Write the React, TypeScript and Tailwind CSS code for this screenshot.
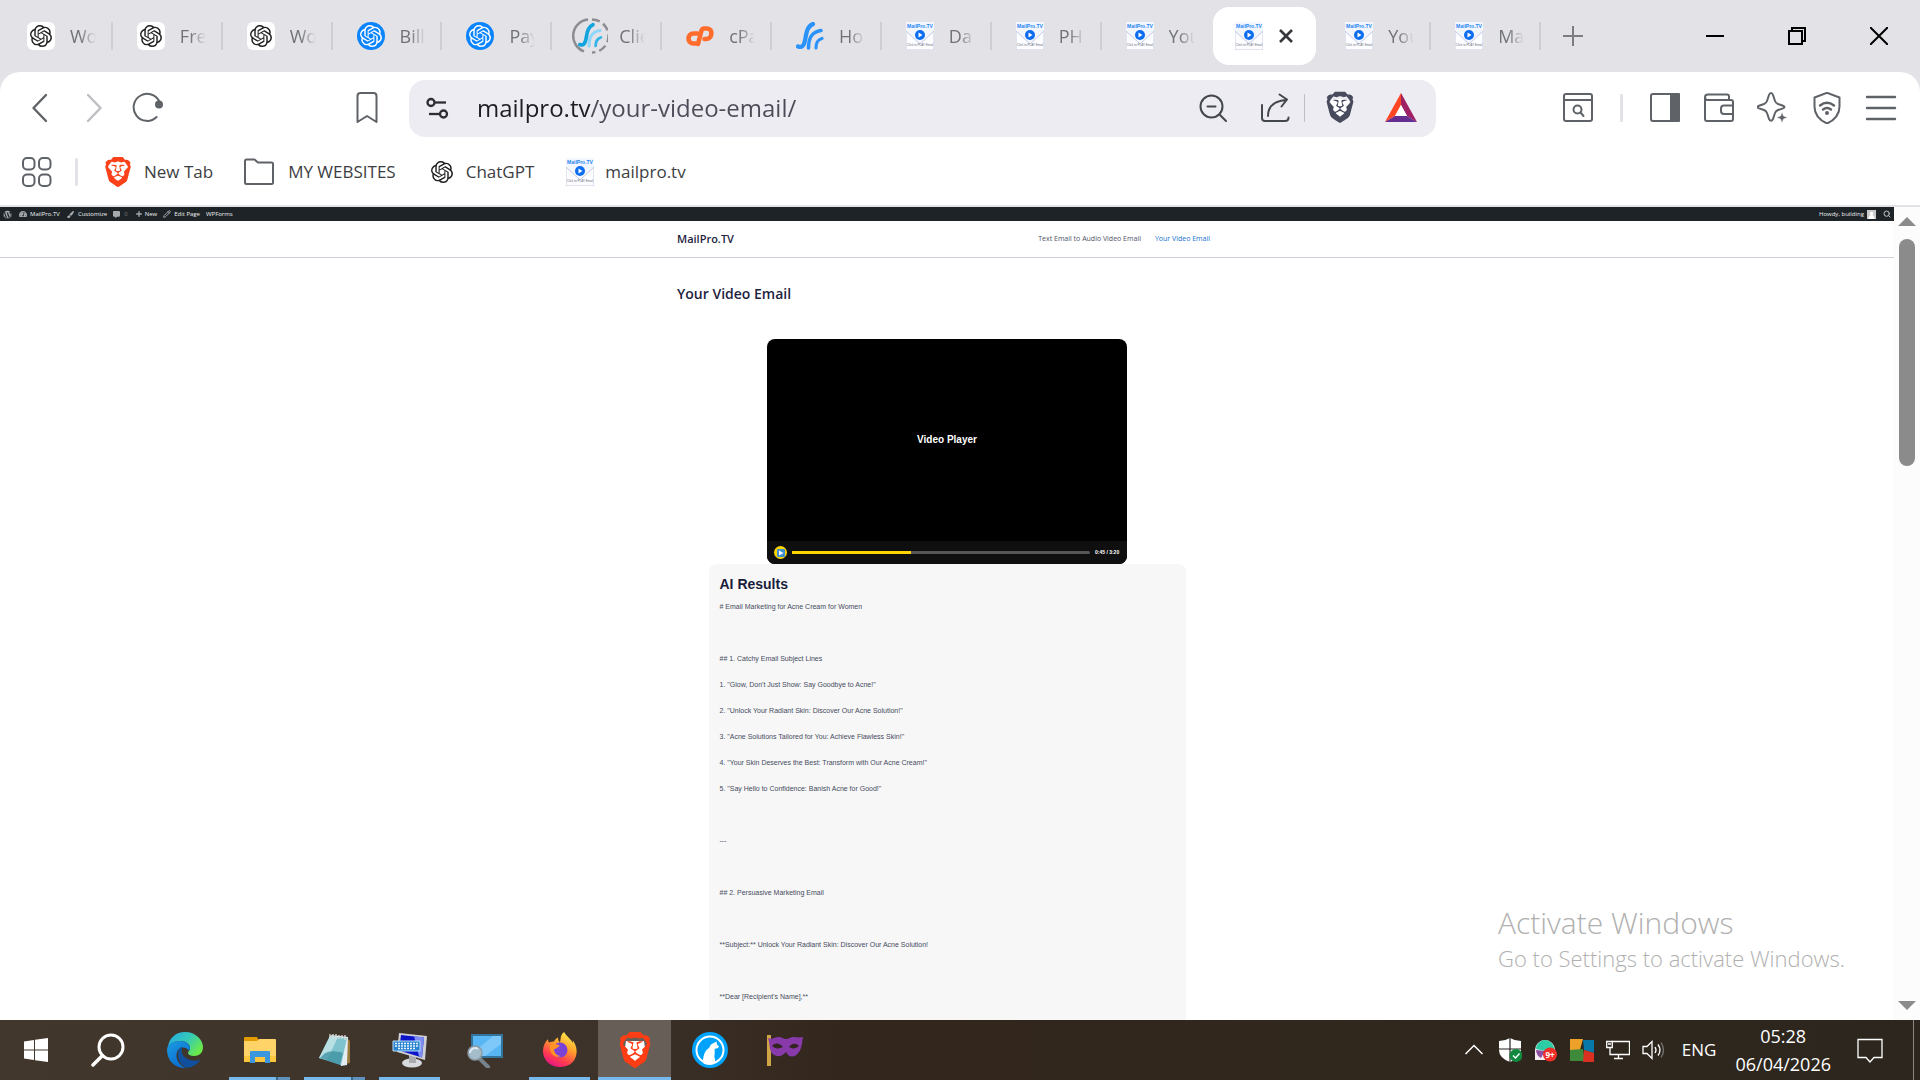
import React from "react";
import { SiOpenai, SiBrave } from "react-icons/si";
import { FaWordpress, FaTachometerAlt, FaPaintBrush, FaCommentAlt } from "react-icons/fa";
import { Plus, Pencil, Search } from "lucide-react";

function ChatTile() {
  return (
    <span className="flex h-7 w-7 shrink-0 items-center justify-center rounded-md bg-white">
      <SiOpenai size={22} color="#202020" />
    </span>
  );
}

function ChatRound() {
  return (
    <span className="flex h-7 w-7 shrink-0 items-center justify-center rounded-full bg-[#0a84ff]">
      <SiOpenai size={22} color="#ffffff" />
    </span>
  );
}

function Swoosh({ a, b, c }: { a: string; b: string; c: string }) {
  return (
    <g fill="none" strokeLinecap="round">
      <path d="M2 24.500c4 1.500 6-1 7-6 1.500-8 2-14 8-16.500" stroke={a} strokeWidth="4.200" />
      <path d="M12.500 26c0-10 3-16 12.500-17.500" stroke={b} strokeWidth="3.600" />
      <path d="M20 26c0-5 1-8 6-9.500" stroke={c} strokeWidth="3.200" />
    </g>
  );
}

function ClientIcon() {
  return (
    <svg viewBox="0 0 36 36" className="-mx-1 h-9 w-9 shrink-0" aria-hidden="true">
      <path d="M16 1.500A16.500 16.500 0 0 0 12 33.400" fill="none" stroke="#8b8d92" strokeWidth="2.500" />
      <path d="M20 1.500A16.500 16.500 0 0 1 20 34.500" fill="none" stroke="#8b8d92" strokeWidth="2.500" strokeDasharray="8 4" />
      <g transform="translate(6 5) scale(0.88)">
        <Swoosh a="#12a5dd" b="#8fd6fb" c="#35b4e8" />
      </g>
    </svg>
  );
}

function HostIcon() {
  return (
    <svg viewBox="0 0 28 28" className="h-7 w-7 shrink-0" aria-hidden="true">
      <Swoosh a="#2a92fb" b="#2a92fb" c="#2a92fb" />
    </svg>
  );
}

function CpIcon() {
  return (
    <svg viewBox="0 0 28 28" className="h-7 w-7 shrink-0" fill="none" stroke="#ff6c2c" strokeWidth="4.600" strokeLinecap="round" aria-hidden="true">
      <path d="M11.500 11.500H7.500C1 11.500 1 21.500 7 21.500H9.500" />
      <path d="M12 22L15.500 8.500Q16.200 6.500 18 6.500H21C27.500 6.500 26.500 17 20 17H18.500" />
    </svg>
  );
}

function MailIcon() {
  return (
    <svg viewBox="0 0 28 28" className="h-7 w-7 shrink-0" aria-hidden="true">
      <rect width="28" height="28" fill="#f3f6fd" />
      <path d="M0 9l14 13L28 9v19H0z" fill="#fdfdff" stroke="#c3cbe3" strokeWidth="1" />
      <text x="14" y="6" textAnchor="middle" fontSize="5" fontWeight="700" fill="#1d86f5" fontFamily="Liberation Sans">MailPro.TV</text>
      <circle cx="14" cy="13" r="5" fill="#0d6df0" />
      <path d="M12.500 10.500v5l4-2.500z" fill="#fff" />
      <text x="14" y="24" textAnchor="middle" fontSize="3" fill="#6b6f7c" fontFamily="Liberation Sans">Click to PLAY Email</text>
    </svg>
  );
}

const tabs = [
  { icon: <ChatTile />, label: "Wo", sep: true },
  { icon: <ChatTile />, label: "Fre", sep: true },
  { icon: <ChatTile />, label: "Wo", sep: true },
  { icon: <ChatRound />, label: "Bill", sep: true },
  { icon: <ChatRound />, label: "Pay", sep: true },
  { icon: <ClientIcon />, label: "Clie", sep: true },
  { icon: <CpIcon />, label: "cPa", sep: true },
  { icon: <HostIcon />, label: "Ho", sep: true },
  { icon: <MailIcon />, label: "Da", sep: true },
  { icon: <MailIcon />, label: "PH", sep: true },
  { icon: <MailIcon />, label: "You", sep: false },
  { icon: <MailIcon />, label: "", active: true, sep: false },
  { icon: <MailIcon />, label: "You", sep: true },
  { icon: <MailIcon />, label: "Ma", sep: true },
];

function TabStrip() {
  return (
    <header className="flex h-[72px] shrink-0 items-center bg-[#e3e2e7] pl-[3px]">
      <div role="tablist" className="grid min-w-0 max-w-[1538px] flex-1 grid-cols-[repeat(14,minmax(0,1fr))] items-center">
        {tabs.map((t, i) =>
          t.active ? (
            <div key={i} className="flex h-[58px] items-center px-[2px]">
              <div role="tab" aria-selected="true" className="flex h-full w-[103px] items-center gap-[15px] rounded-2xl bg-white pl-[22px]">
                {t.icon}
                <button aria-label="Close tab">
                  <svg viewBox="0 0 16 16" className="h-4 w-4"><path d="M2 2l12 12M14 2L2 14" stroke="#35373d" strokeWidth="2.600" /></svg>
                </button>
              </div>
            </div>
          ) : (
            <button key={i} role="tab" aria-selected="false" className="flex h-[58px] items-center pl-6">
              {t.icon}
              <span className="ml-[15px] w-8 shrink-0 text-left text-[18px] whitespace-nowrap text-[#6f7277] [mask-image:linear-gradient(90deg,#000_10px,transparent_26px)]">
                {t.label}
              </span>
              <span className={t.sep ? "ml-auto h-7 w-[2px] bg-[#cfced4]" : "hidden"} />
            </button>
          )
        )}
      </div>
      <button aria-label="New tab" className="ml-[22px]">
        <svg viewBox="0 0 20 20" className="h-5 w-5"><path d="M10 0v20M0 10h20" stroke="#7b7d83" strokeWidth="2" /></svg>
      </button>
      <div className="ml-auto flex items-center gap-16 pr-8">
        <button aria-label="Minimize"><svg viewBox="0 0 18 18" className="h-[18px] w-[18px]"><path d="M0 9h18" stroke="#000" strokeWidth="2" /></svg></button>
        <button aria-label="Restore"><svg viewBox="0 0 18 18" className="h-[18px] w-[18px]" fill="none" stroke="#000" strokeWidth="2"><path d="M1 4h13v13H1z" /><path d="M4 4V1h13v13h-3" /></svg></button>
        <button aria-label="Close"><svg viewBox="0 0 18 18" className="h-[18px] w-[18px]"><path d="M0 0l18 18M18 0L0 18" stroke="#000" strokeWidth="2" /></svg></button>
      </div>
    </header>
  );
}

function Ico({ children, size = "h-8 w-8" }: { children: React.ReactNode; size?: string }) {
  return (
    <svg viewBox="0 0 32 32" className={size} fill="none" stroke="#5f6368" strokeWidth="2" strokeLinecap="round" strokeLinejoin="round" aria-hidden="true">
      {children}
    </svg>
  );
}

function Toolbar() {
  return (
    <div className="flex h-[72px] shrink-0 items-center rounded-t-[20px] bg-white">
      <div className="flex items-center gap-[22px] pl-6">
        <button aria-label="Back"><Ico><path d="M22 3L9.500 16 22 29" strokeWidth="2.400" /></Ico></button>
        <button aria-label="Forward"><Ico><path d="M10 3l12.500 13L10 29" stroke="#bdbdc2" strokeWidth="2.400" /></Ico></button>
        <button aria-label="Reload">
          <Ico><path d="M24.600 25A13.500 13.500 0 1 1 27.500 10" /><circle cx="27" cy="12.500" r="3" fill="#5f6368" /></Ico>
        </button>
      </div>
      <button aria-label="Bookmark" className="ml-[187px]">
        <Ico><path d="M6.500 4c0-1.500 1-3 3-3h13c2 0 3 1.500 3 3v26L16 24 6.500 30z" /></Ico>
      </button>
      <div className="ml-[26px] flex h-[57px] w-[1027px] min-w-0 items-center rounded-2xl bg-[#edecf2] pr-[19px] pl-4">
        <button aria-label="Site settings">
          <svg viewBox="0 0 24 24" className="h-6 w-6" fill="none" stroke="#2d2e33" strokeWidth="2.300"><circle cx="6" cy="6.500" r="3.500" /><path d="M10 6.500h11" /><circle cx="18.500" cy="18" r="3.500" /><path d="M4 18h11" /></svg>
        </button>
        <input
          aria-label="Address"
          defaultValue="mailpro.tv/your-video-email/"
          className="ml-7 min-w-0 flex-1 bg-[linear-gradient(90deg,#1d1d22_114px,#4c4c59_114px)] bg-clip-text text-2xl text-transparent outline-none"
        />
        <button aria-label="Zoom out"><Ico><g stroke="#44474e"><circle cx="14.500" cy="14.500" r="11" /><path d="M23 23l6 6M10.500 14.500h8" /></g></Ico></button>
        <button aria-label="Share" className="ml-[30px]"><Ico><g stroke="#44474e"><path d="M3 13v13q0 3 3 3h20q3.500 0 3.500-3.500" /><path d="M9 24c0-9 6-15 18-16M20.500 2.500L28 7.500 22.500 14.500" /></g></Ico></button>
        <span className="mx-[13px] h-7 w-px bg-[#bfbfc7]" />
        <button aria-label="Shields" className="ml-[4px]">
          <svg viewBox="0 0 24 24" className="h-9 w-9" aria-hidden="true">
            <path d="M6.500 6h11l1.500 6-4 6-3 2-3-2-4-6z" fill="#fff" />
            <g transform="translate(1.500 1)"><SiBrave size={21} color="#484b5c" /></g>
          </svg>
        </button>
        <button aria-label="Rewards" className="ml-[27px]">
          <svg viewBox="0 0 32 30" className="h-[30px] w-8"><path d="M16 0L0 29l10-6 6-11z" fill="#ff4724" /><path d="M16 0l16 29-10-6-6-11z" fill="#9e1f63" /><path d="M0 29l10-6h12l10 6z" fill="#662d91" /><path d="M16 12l-6 11h12z" fill="#fff" /></svg>
        </button>
      </div>
      <div className="ml-auto flex items-center pr-[23px]">
        <button aria-label="Find on page"><Ico><rect x="2" y="2" width="28" height="27" rx="2" /><path d="M2 8h28" /><circle cx="15.500" cy="17.500" r="4" /><path d="M18.500 20.500l3 3.500" /></Ico></button>
        <span className="mx-[26px] h-7 w-[3px] bg-[#e3e2e7]" />
        <div className="flex items-center gap-[22px]">
          <button aria-label="Side panel"><Ico><rect x="2" y="2" width="28" height="27" rx="2" /><path d="M22 2h8v27h-8z" fill="#5f6368" /></Ico></button>
          <button aria-label="Wallet"><Ico><path d="M2 6v21q0 2 2 2h24q2 0 2-2V10q0-2-2-2H4q-2-.5-2-3 0-2.500 3-2.500h19q2 0 2 2v3" /><path d="M30 13.500H21q-3 0-3 3v2.500q0 3 3 3h9" /></Ico></button>
          <button aria-label="Assistant"><Ico><path d="M14 1c1 0 1.500.5 2 2l2 6q.7 2 3 3l5 1.800q3 1.200 0 2.600l-5 1.600q-2.300 1-3 3l-2 6q-2 3.500-4 0l-2-6q-.7-2-3-3l-5-1.600q-3-1.400 0-2.600l5-1.800q2.300-1 3-3l2-6q.7-2 2-2z" /><path d="M25 20l1.500 4 4 1.500-4 1.500L25 31l-1.500-4-4-1.500 4-1.500z" fill="#5f6368" stroke="#fff" strokeWidth="0.500" /></Ico></button>
          <button aria-label="VPN"><Ico><path d="M16 0.800l12.500 4.700v9c0 8-5 13.500-12.500 17C8.500 28 3.500 22.500 3.500 14.500v-9z" /><path d="M9 13.500q7-5.500 14 0M12 17.500q4-3 8 0" strokeWidth="2.400" /><circle cx="16" cy="21" r="1" fill="#5f6368" /></Ico></button>
          <button aria-label="Menu"><Ico><path d="M2 5h28M2 16h28M2 27h28" strokeWidth="2.400" /></Ico></button>
        </div>
      </div>
    </div>
  );
}

function BookmarksBar() {
  return (
    <nav aria-label="Bookmarks" className="flex h-[63px] shrink-0 items-center border-b-2 border-[#e3e2e7] bg-white pb-[6px] pl-[21px] text-[17px] text-[#3c3e43]">
      <button aria-label="Apps"><Ico><rect x="2" y="2" width="11.500" height="11.500" rx="4" /><rect x="18" y="2" width="11.500" height="11.500" rx="4" /><rect x="2" y="18.500" width="11.500" height="11.500" rx="4" /><rect x="18" y="18.500" width="11.500" height="11.500" rx="4" /></Ico></button>
      <span className="ml-[22px] h-7 w-[3px] rounded bg-[#e3e2e7]" />
      <a href="#newtab" className="ml-[25px] flex items-center gap-[11px]"><SiBrave size={30} color="#fb4119" />New Tab</a>
      <a href="#websites" className="ml-[30px] flex items-center gap-[13px]"><Ico><path d="M2 5q0-1.500 1.500-1.500h8L15 6.500h13.500Q30 6.500 30 8v18.500q0 1.500-1.500 1.500h-25Q2 28 2 26.500z" /></Ico>MY WEBSITES</a>
      <a href="#chatgpt" className="ml-[35px] flex items-center gap-[13px]"><SiOpenai size={22} color="#202020" />ChatGPT</a>
      <a href="#mailpro" className="ml-[32px] flex items-center gap-[11px]"><MailIcon />mailpro.tv</a>
    </nav>
  );
}

function AdminBar() {
  return (
    <div className="flex h-[14px] shrink-0 items-center bg-[#1d2327] pr-[3px] pl-[3px] text-[6px] leading-[14px] text-[#f0f0f1]">
      <a href="#wp" aria-label="WordPress"><FaWordpress size={9} color="#a7aaad" /></a>
      <a href="#site" className="ml-[7px] flex items-center gap-[3px]"><FaTachometerAlt size={8} color="#a7aaad" />MailPro.TV</a>
      <a href="#customize" className="ml-[7px] flex items-center gap-[4px]"><FaPaintBrush size={7} color="#a7aaad" />Customize</a>
      <a href="#comments" className="ml-[6px] flex items-center gap-[4px] text-[#7b7f83]"><FaCommentAlt size={7} color="#a7aaad" />0</a>
      <a href="#new" className="ml-[7px] flex items-center gap-[2px]"><Plus size={8} strokeWidth={4} color="#a7aaad" />New</a>
      <a href="#edit" className="ml-[6px] flex items-center gap-[3px]"><Pencil size={8} strokeWidth={3} color="#a7aaad" />Edit Page</a>
      <a href="#wpforms" className="ml-[6px]">WPForms</a>
      <a href="#profile" className="ml-auto flex items-center gap-[3px]">
        Howdy, building
        <svg viewBox="0 0 9 9" className="h-[9px] w-[9px]"><rect width="9" height="9" fill="#c9c9c9" /><circle cx="4.500" cy="3.500" r="1.700" fill="#fff" /><path d="M1.500 9q0-4 3-4t3 4z" fill="#fff" /></svg>
      </a>
      <button aria-label="Search site" className="ml-[7px]"><Search size={8} strokeWidth={3} color="#c3c6c9" /></button>
    </div>
  );
}

const results = [
  "# Email Marketing for Acne Cream for Women",
  "",
  "## 1. Catchy Email Subject Lines",
  "1. \"Glow, Don't Just Show: Say Goodbye to Acne!\"",
  "2. \"Unlock Your Radiant Skin: Discover Our Acne Solution!\"",
  "3. \"Acne Solutions Tailored for You: Achieve Flawless Skin!\"",
  "4. \"Your Skin Deserves the Best: Transform with Our Acne Cream!\"",
  "5. \"Say Hello to Confidence: Banish Acne for Good!\"",
  "",
  "---",
  "",
  "## 2. Persuasive Marketing Email",
  "",
  "**Subject:** Unlock Your Radiant Skin: Discover Our Acne Solution!",
  "",
  "**Dear [Recipient's Name],**",
];

function Page() {
  return (
    <div className="flex min-w-0 flex-1 flex-col overflow-hidden bg-white">
      <AdminBar />
      <div className="shrink-0 border-b border-[#d0d0d8]">
        <div className="mx-auto flex h-9 w-full max-w-[540px] items-center justify-between pr-[7px]">
          <a href="#home" className="text-[11px] font-semibold text-[#1e2340]">MailPro.TV</a>
          <nav className="flex gap-[14px] text-[7px] text-[#4d5266]">
            <a href="#text">Text Email to Audio Video Email</a>
            <a href="#video" className="text-[#1272d0]">Your Video Email</a>
          </nav>
        </div>
      </div>
      <main className="mx-auto w-full max-w-[540px] pt-[26px]">
        <h1 className="text-[14px] leading-5 font-semibold text-[#1e2340]">Your Video Email</h1>
        <section aria-label="Video" className="mx-auto mt-[35px] flex h-[225px] w-[360px] flex-col overflow-hidden rounded-lg bg-black font-['Liberation_Sans',sans-serif] font-bold text-white">
          <div className="flex flex-1 items-center justify-center pb-[2px] text-[10px]">Video Player</div>
          <div className="flex h-[23px] items-center bg-[#0f0f0f] px-[7px]">
            <button aria-label="Play" className="flex h-[13px] w-[13px] items-center justify-center rounded-full bg-[#ffd500]">
              <svg viewBox="0 0 8 8" className="h-2 w-2"><rect width="8" height="8" rx="1" fill="#3f8fd0" /><path d="M2 1.500v5l4.500-2.500z" fill="#fff" /></svg>
            </button>
            <div role="progressbar" aria-valuenow={40} className="ml-[5px] h-[3px] flex-1 rounded bg-[#555]">
              <div className="h-full w-2/5 bg-[#ffd500]" />
            </div>
            <span className="ml-[5px] w-[25px] text-[5px] whitespace-nowrap">0:45 / 3:20</span>
          </div>
        </section>
        <section className="mx-auto w-[477px] rounded-lg bg-[#f7f7f7] px-[11px] pt-[10px] font-['Liberation_Sans',sans-serif]">
          <h2 className="text-[14px] leading-5 font-bold text-[#1a1d3a]">AI Results</h2>
          <div className="text-[7px] leading-[26px] text-[#454b60]">
            {results.map((r, i) => (
              <p key={i} className="min-h-[26px]">{r}</p>
            ))}
          </div>
          <div className="h-16" />
        </section>
      </main>
    </div>
  );
}

function ScrollBar() {
  return (
    <div className="flex w-[26px] shrink-0 flex-col items-center bg-[#fcfcfc] py-[10px]">
      <svg viewBox="0 0 18 9" className="h-[9px] w-[18px]"><path d="M0 9h18L9 0z" fill="#8b8b8b" /></svg>
      <div className="mt-[13px] h-[227px] w-4 rounded-full bg-[#8b8b8b]" />
      <svg viewBox="0 0 18 9" className="mt-auto h-[9px] w-[18px]"><path d="M0 0h18L9 9z" fill="#8b8b8b" /></svg>
    </div>
  );
}

function BraveColor() {
  return (
    <svg viewBox="0 0 24 24" className="h-9 w-9" aria-hidden="true">
      <path d="M6 6h12l1 7-4 5-3 3-3-3-4-5z" fill="#fff" />
      <SiBrave size={24} color="#ff3d14" />
    </svg>
  );
}

function StartIcon() {
  return <svg viewBox="0 0 24 24" className="h-6 w-6"><path d="M0 3.500l10-1.500v9.500H0zM11 1.800L24 0v11.500H11zM0 12.500h10V22L0 20.600zM11 12.500h13V24l-13-1.800z" fill="#fff" /></svg>;
}

function SearchIcon() {
  return <svg viewBox="0 0 34 34" className="h-[34px] w-[34px]"><circle cx="20" cy="14" r="12" fill="none" stroke="#fff" strokeWidth="3" /><path d="M11.500 22.500L2 32" stroke="#fff" strokeWidth="3.500" strokeLinecap="round" /></svg>;
}

function EdgeIcon() {
  return (
    <svg viewBox="0 0 36 36" className="h-9 w-9">
      <defs>
        <linearGradient id="eg1" x1="0" y1="0" x2="1" y2="0.600"><stop offset="0" stopColor="#22a8e8" /><stop offset="0.550" stopColor="#35c9b8" /><stop offset="1" stopColor="#6aea4a" /></linearGradient>
        <linearGradient id="eg2" x1="0" y1="0" x2="0.600" y2="1"><stop offset="0" stopColor="#1b9de2" /><stop offset="1" stopColor="#0a6ad0" /></linearGradient>
      </defs>
      <path d="M1 15C2 6 9 0 18 0c11 0 18 8 18 15 0 6-4 9-9 9-4 0-6-1.500-6-3s2-2 2-5c0-4-4-7-9-7C8 9 3 11 1 15z" fill="url(#eg1)" />
      <path d="M0 18C0 12 6 9 13 9c6 0 10 3 10 7 0 1-.3 2-1 3-2-4-8-5-11-1-4 6 0 15 8 18C8 37 0 28 0 18z" fill="url(#eg2)" />
      <path d="M15 14.500c-7 4-5 17 5 21.300 6-.5 11-4 13.500-8.300-9 3.500-17-1-18.500-7-.5-2 0-4 0-6z" fill="#10509f" />
    </svg>
  );
}

function FolderIcon() {
  return (
    <svg viewBox="0 0 32 28" className="h-7 w-8">
      <path d="M0 2q0-1 1-1h12l2 4H0z" fill="#e29b00" />
      <path d="M0 5h13l2-2h16q1 0 1 1v22H0z" fill="#ffd367" />
      <path d="M0 20h32v6H0z" fill="#fcc63c" />
      <path d="M6 27V16q0-1 1-1h18q1 0 1 1v11h-5v-6H11v6z" fill="#3a96dd" />
    </svg>
  );
}

function NotepadIcon() {
  return (
    <svg viewBox="0 0 34 34" className="h-[34px] w-[34px]">
      <path d="M28 4l4 4v22l-6 1z" fill="#9a7a3c" />
      <path d="M13 2l17 2-1 28-6 1z" fill="#e4eef2" />
      <path d="M12 3l17 2-6 27L1 25z" fill="#7fc3cf" />
      <path d="M12 3l8 1L9 27l-8-2z" fill="#b8e0e4" />
      <path d="M5 22c5-5 14-4 20-2l-3 12L2 25z" fill="#3f94a3" opacity="0.800" />
      <path d="M12 1v4M15 1v4M18 1v5M21 2v4M24 2v4M27 2v5" stroke="#ddd" strokeWidth="1.300" />
    </svg>
  );
}

function MonitorIcon() {
  return (
    <svg viewBox="0 0 36 36" className="h-9 w-9">
      <ellipse cx="20" cy="31" rx="10" ry="4.500" fill="#d9dadd" />
      <path d="M17 23h7v8h-7z" fill="#a9abb0" />
      <path d="M7 1l28 3-2 24L5 20z" fill="#cfd0d4" />
      <path d="M9 3l23 2.500-2 20L7 18.500z" fill="#0c14c8" />
      <path d="M22 4l10 1.500-2 20-3-1z" fill="#7e8df2" />
      <path d="M1 9h27v10H1z" fill="#2b84d2" stroke="#b5ddf8" strokeWidth="1" />
      <path d="M3 11.500h23M3 14h23M6 16.500h17" stroke="#e8f5ff" strokeWidth="1.300" strokeDasharray="2 1" />
    </svg>
  );
}

function MagnifyIcon() {
  return (
    <svg viewBox="0 0 36 36" className="h-9 w-9">
      <path d="M5 3h30v22H5z" fill="#58b6f4" stroke="#34749c" strokeWidth="2" />
      <path d="M7 20L26 4h8v8L18 24H7z" fill="#8dd0fb" opacity="0.700" />
      <path d="M13 27l8 8" stroke="#76838d" strokeWidth="4" strokeLinecap="round" />
      <circle cx="8" cy="21" r="7" fill="#a5bccb" stroke="#8b99a3" strokeWidth="1.500" />
      <path d="M3 21a5 5 0 0 1 8-4" stroke="#dbe9f2" strokeWidth="2" fill="none" />
    </svg>
  );
}

function FirefoxIcon() {
  return (
    <svg viewBox="0 0 36 36" className="h-9 w-9">
      <defs>
        <linearGradient id="ff1" x1="0.800" y1="0" x2="0.300" y2="1"><stop offset="0" stopColor="#fff44f" /><stop offset="0.400" stopColor="#ffa22b" /><stop offset="0.750" stopColor="#ff3b4f" /><stop offset="1" stopColor="#e31587" /></linearGradient>
      </defs>
      <path d="M22 0c2 4 7 7 9 11 0-1 0-2-.5-3 4 5 5 11 3.500 16-2 7-8 11-16 11C8 35 1 28 1 19c0-5 2-9 5-12 0 2 .5 3 1 3.500 2-1 4-1 5-1 1-2 2-3 4-4 0 3 1 4 2 5 1-4 0-7 4-10.500z" fill="url(#ff1)" />
      <circle cx="18" cy="18" r="7.500" fill="#7b42d8" />
      <path d="M8 13c4-2 8-1 10 1-3 1-3 3-6 3 0 4 3 7 7 7-7 3-12-3-11-11z" fill="#ff9328" />
    </svg>
  );
}

function WolfIcon() {
  return (
    <svg viewBox="0 0 36 36" className="h-9 w-9">
      <circle cx="18" cy="18" r="18" fill="#00a3fb" />
      <circle cx="18" cy="18" r="13.500" fill="none" stroke="#fff" strokeWidth="2" />
      <path d="M11 31c0-6 1-12 6-15l2-3.500 5.500-3 .5 3 2 2-1 1.500-3.500 1c1 4-1 7 .5 10 .5 3 0 4-1 5-4 1.500-8 1-11-1z" fill="#fff" />
    </svg>
  );
}

function MaskIcon() {
  return (
    <svg viewBox="0 0 36 36" className="h-9 w-9">
      <path d="M0 3h4v31H0z" fill="#cfa646" />
      <path d="M1 6c5 2 6-1 11-1 3 0 4 2 7 2s4-2 8-2c3 0 5 1 9 0-1 5-1 11-4 15-4 6-10 6-13 0-5 6-12 5-15 0-2-4-1-9-3-14z" fill="#883aab" />
      <path d="M5 14c3-4 8-3 11 1-4 2-8 2-11-1zM22 15c3-4 7-4 10-1-3 3-7 3-10 1z" fill="#33241f" />
    </svg>
  );
}

const apps = [
  { name: "Microsoft Edge", icon: <EdgeIcon />, line: "" },
  { name: "File Explorer", icon: <FolderIcon />, line: "split" },
  { name: "Notepad", icon: <NotepadIcon />, line: "split" },
  { name: "On-screen keyboard", icon: <MonitorIcon />, line: "full" },
  { name: "Magnifier", icon: <MagnifyIcon />, line: "" },
  { name: "Firefox", icon: <FirefoxIcon />, line: "full" },
  { name: "Brave", icon: <BraveColor />, line: "active" },
  { name: "LibreWolf", icon: <WolfIcon />, line: "" },
  { name: "Mask", icon: <MaskIcon />, line: "" },
];

function Taskbar() {
  return (
    <footer className="flex h-[60px] shrink-0 items-center bg-[linear-gradient(90deg,#41372c_0%,#3d332a_30%,#33261d_44%,#30271d_70%,#2c261e_100%)] text-white">
      <button aria-label="Start" className="flex w-[72px] justify-center"><StartIcon /></button>
      <button aria-label="Search" className="flex w-[72px] justify-center"><SearchIcon /></button>
      <div className="ml-1 flex h-full gap-[2px]">
        {apps.map((a) => (
          <button
            key={a.name}
            aria-label={a.name}
            className={a.line === "active" ? "flex h-full w-[73px] flex-col items-center bg-[#675e57]" : "flex h-full w-[73px] flex-col items-center"}
          >
            <span className="flex flex-1 items-center pt-[3px]">{a.icon}</span>
            {a.line === "" && <span className="h-[3px]" />}
            {a.line === "full" && <span className="h-[3px] w-[61px] bg-[#76b9ed]" />}
            {a.line === "active" && <span className="h-[3px] w-full bg-[#76b9ed]" />}
            {a.line === "split" && (
              <span className="flex h-[3px] w-[61px]"><span className="w-[47px] bg-[#76b9ed]" /><span className="w-[2px] bg-[#3f6584]" /><span className="flex-1 bg-[#5f93bd]" /></span>
            )}
          </button>
        ))}
      </div>
      <div className="ml-auto flex h-full items-center">
        <div className="flex items-center gap-3">
          <button aria-label="Show hidden icons"><svg viewBox="0 0 24 24" className="h-6 w-6"><path d="M3.500 16L12 7.500l8.500 8.500" fill="none" stroke="#fff" strokeWidth="1.500" /></svg></button>
          <button aria-label="Security">
            <svg viewBox="0 0 24 24" className="h-6 w-6"><path d="M12 0q5 3 11 3v9q0 8-11 12Q1 20 1 12V3q6 0 11-3z" fill="#fff" /><path d="M12 0v24M1 11h22" stroke="#222" strokeWidth="1.200" /><circle cx="18" cy="17.500" r="6.500" fill="#10893e" /><path d="M15 17.500l2.500 2.500 4-4.500" fill="none" stroke="#fff" strokeWidth="1.400" /></svg>
          </button>
          <button aria-label="Alerts">
            <svg viewBox="0 0 24 24" className="h-6 w-6"><path d="M1 22V12a10 10 0 0 1 20 0v10z" fill="#f4eef2" /><path d="M2 11a9 9 0 0 1 18 0l-9 2z" fill="#2ccda4" /><path d="M2 12l9 1-4 7q-5-3-5-8z" fill="#8e4f9f" /><circle cx="16" cy="16.500" r="7" fill="#ee2f2a" /><text x="16" y="19.500" textAnchor="middle" fontSize="8" fontWeight="700" fill="#fff" fontFamily="Open Sans">9+</text></svg>
          </button>
          <button aria-label="Antivirus">
            <svg viewBox="0 0 24 24" className="h-6 w-6"><path d="M0 1h13l-3 11H0z" fill="#eda128" /><path d="M13 2h11v13l-10-3z" fill="#0878a8" /><path d="M0 12l13-1 2 12H0z" fill="#3c8a3a" /><path d="M14 12l10 3v9H13z" fill="#d9301f" /></svg>
          </button>
          <button aria-label="Network">
            <svg viewBox="0 0 24 24" className="h-6 w-6" fill="none" stroke="#fff" strokeWidth="1.300"><path d="M6 3.500h17.500v13H4V10M8 20.500h9M12.500 16.500v4" /><path d="M.7 3.500h5.600v6H.7zM2 6h3" /></svg>
          </button>
          <button aria-label="Volume">
            <svg viewBox="0 0 24 24" className="h-6 w-6" fill="none" stroke="#fff" strokeWidth="1.300"><path d="M1 8.500h4l5-5v17l-5-5H1zM13 9q2 3 0 6M16 6.500q4 5.500 0 11" /><path d="M19 4.500q5 7.500 0 15" stroke="#777" /></svg>
          </button>
        </div>
        <button className="ml-4 text-[17px]">ENG</button>
        <button className="ml-[19px] flex flex-col items-center text-[18px] leading-7"><span>05:28</span><span>06/04/2026</span></button>
        <button aria-label="Notifications" className="ml-[26px]">
          <svg viewBox="0 0 26 26" className="h-[26px] w-[26px]" fill="none" stroke="#fff" strokeWidth="1.300"><path d="M1 2.500h24v18h-8L13 25l-4-4.500H1z" /></svg>
        </button>
        <span className="mr-[6px] ml-[30px] h-full w-px bg-[#8b8680]" />
      </div>
    </footer>
  );
}

export default function App() {
  return (
    <div className="flex h-screen flex-col overflow-hidden bg-[#e3e2e7] font-['Open_Sans','Noto_Sans',sans-serif]">
      <TabStrip />
      <Toolbar />
      <BookmarksBar />
      <div className="relative flex min-h-0 flex-1">
        <Page />
        <ScrollBar />
        <div className="pointer-events-none absolute right-[78px] bottom-[46px] w-[344px] font-light text-[#b0b0b0]">
          <p className="text-[30px] leading-[38px]">Activate Windows</p>
          <p className="text-[22px] leading-8 whitespace-nowrap">Go to Settings to activate Windows.</p>
        </div>
      </div>
      <Taskbar />
    </div>
  );
}
